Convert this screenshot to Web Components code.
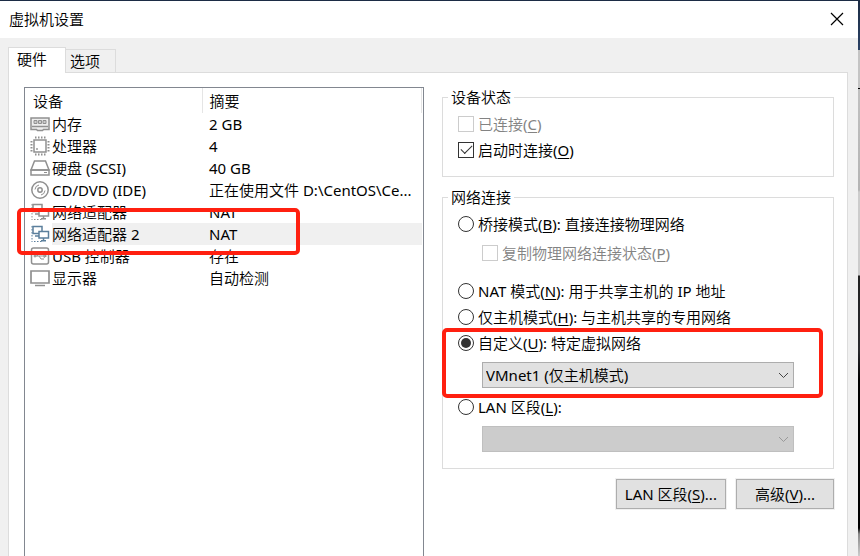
<!DOCTYPE html>
<html lang="zh-CN">
<head>
<meta charset="utf-8">
<title>虚拟机设置</title>
<style>
    html, body { height: 100%; }

    body {
        margin: 0;
        box-sizing: border-box;
        padding: 1px 2px 0 0;
        overflow: hidden;
        font: 15px/20px 'Noto Sans', 'Noto Sans CJK SC DemiLight', 'Noto Sans CJK SC', sans-serif;
        color: #000;
        background: linear-gradient(#1c2c45 1px, #2b4265 50px, #c4c4c4 50px, #c4c4c4 88px, #000 88px, #000 89px, #c0c0c0 89px, #b4b4b4 190px, #ccc 192px, #ccc 275px, #222 276px, #2a2a2e 350px, #000 380px, #000 528px, #8a8a8a 534px, #ccc 556px);
    }
</style>
</head>
<body>
<settings-window heading="虚拟机设置">
    <tab-strip slot="tabs" tabs="硬件,选项"></tab-strip>
    <device-list></device-list>
    <network-settings></network-settings>
</settings-window>

<script>
class SettingsWindow extends HTMLElement {
    constructor() {
        super();
        const heading = this.getAttribute('heading') || '';
        const shadow = this.attachShadow({ mode: 'open' });

        shadow.innerHTML = `
            <style>
            * { box-sizing: border-box; }

            :host {
                display: flex;
                flex-direction: column;
                height: 100%;
                background: #f0f0f0;
            }

            header {
                display: flex;
                align-items: center;
                justify-content: space-between;
                height: 37px;
                padding: 0 8px 2px 9px;
                background: #fff;
            }

            h1 {
                margin: 0;
                font-size: 15px;
                font-weight: 400;
            }

            button {
                display: flex;
                padding: 6px;
                border: 0;
                background: none;
            }

            .body {
                flex: 1;
                display: flex;
                flex-direction: column;
                min-height: 0;
                padding: 9px 10px 0 8px;
            }

            .panel {
                flex: 1;
                display: grid;
                grid-template-columns: 400fr 392fr;
                gap: 18px;
                min-height: 0;
                padding: 14px 13px 0 15px;
                background: #fff;
                border: 1px solid #dcdcdc;
                border-bottom: 0;
            }
            </style>

            <header>
                <h1>${heading}</h1>
                <button type="button" aria-label="关闭">
                    <svg width="14" height="14" viewBox="0 0 14 14" stroke="#000" stroke-width="1.2">
                        <path d="M1 1l12 12M13 1L1 13" />
                    </svg>
                </button>
            </header>
            <div class="body">
                <slot name="tabs"></slot>
                <main class="panel"><slot></slot></main>
            </div>`;
    }
}

class TabStrip extends HTMLElement {
    constructor() {
        super();
        const tabs = (this.getAttribute('tabs') || '').split(',');
        const shadow = this.attachShadow({ mode: 'open' });

        shadow.innerHTML = `
            <style>
            :host {
                display: flex;
                align-items: flex-end;
                position: relative;
                z-index: 1;
                margin-bottom: -1px;
            }

            button {
                box-sizing: border-box;
                height: 24px;
                padding: 0 15px 0 4px;
                border: 1px solid #dcdcdc;
                border-left: 0;
                background: #f0f0f0;
                font: inherit;
                color: inherit;
            }

            button[aria-selected="true"] {
                height: 26px;
                padding: 0 18px 3px 8px;
                border-left: 1px solid #dcdcdc;
                border-bottom: 0;
                background: #fff;
            }
            </style>
            ${tabs.map((t, i) => `<button type="button" role="tab" aria-selected="${i === 0}">${t}</button>`).join('')}`;

        this.setAttribute('role', 'tablist');
        const buttons = shadow.querySelectorAll('button');
        buttons.forEach((b) => {
            b.addEventListener('click', () => {
                buttons.forEach((o) => o.setAttribute('aria-selected', o === b));
            });
        });
    }
}

// Red frame, laid over its positioned parent
class MarkerFrame extends HTMLElement {
    constructor() {
        super();
        const shadow = this.attachShadow({ mode: 'open' });
        shadow.innerHTML = `
            <style>
            :host {
                position: absolute;
                z-index: 2;
                box-sizing: border-box;
                border: 4px solid #ff2010;
                border-radius: 5px;
                pointer-events: none;
            }
            </style>`;
    }
}

const ICONS = {
    memory: `
        <path d="M1 4h18v11.500H13.500l-1 1h-5l-1-1H1z" fill="#eee" stroke-width="1.500"/>
        <path d="M4 6.500h3v3H4zM8.500 6.500h3v3h-3zM13 6.500h3v3h-3z" fill="#ccc"/>
        <path d="M2 12.500h16" stroke-width="1.500"/>`,
    cpu: `
        <path d="M4 4h12v12H4z" stroke-width="1.500"/>
        <path d="M5 1.500h11M5 18.500h11M1.500 5v11M18.500 5v11" stroke-width="2" stroke-dasharray="1.500 1.500"/>
        <circle cx="7" cy="13" r=".6"/>`,
    disk: `
        <path d="M4.500 3h11l3.500 9H1z" stroke-width="1.500"/>
        <path d="M1 12h18v5H1z" stroke-width="1.500"/>
        <path d="M14 14.500h3"/>`,
    cd: `
        <circle cx="10" cy="10" r="8.200" stroke-width="1.500"/>
        <circle cx="10" cy="10" r="2.200" stroke-width="1.500"/>
        <path d="M5 9.500A5 5 0 0 1 9 5M15 10.500A5 5 0 0 1 11 15"/>`,
    network: `
        <path d="M2 2v16M4 17.500h8" stroke-dasharray="1.500 1.500"/>
        <path d="M3 2.500h9v7H3z" fill="#fff" stroke-width="1.500"/>
        <path d="M5 12h4" stroke-width="1.500"/>
        <path d="M9 7.500h9.500v6.500H9z" fill="#fff" stroke-width="1.500"/>
        <path d="M13.500 14v2.500M11 16.700h5" stroke-width="1.500"/>`,
    usb: `
        <rect x="1.500" y="2" width="17" height="16" rx="2" stroke-width="1.500"/>
        <path d="M4 10h12M7 10l2-3h3M9 10l2 3h3"/>
        <path d="M14 8.500l2.500 1.500-2.500 1.500z"/>
        <circle cx="5" cy="10" r="1"/>`,
    display: `
        <path d="M1 3h18v12H1z" stroke-width="1.700"/>
        <path d="M5 17.500h10" stroke-width="1.500"/>`
};

const DEVICES = [
    { icon: 'memory', name: '内存', summary: '2 GB' },
    { icon: 'cpu', name: '处理器', summary: '4' },
    { icon: 'disk', name: '硬盘 (SCSI)', summary: '40 GB' },
    { icon: 'cd', name: 'CD/DVD (IDE)', summary: '正在使用文件 D:\\CentOS\\Ce...' },
    { icon: 'network', name: '网络适配器', summary: 'NAT' },
    { icon: 'network', name: '网络适配器 2', summary: 'NAT', selected: true },
    { icon: 'usb', name: 'USB 控制器', summary: '存在' },
    { icon: 'display', name: '显示器', summary: '自动检测' }
];

class DeviceList extends HTMLElement {
    constructor() {
        super();
        const shadow = this.attachShadow({ mode: 'open' });

        const rowsHTML = DEVICES.map((d) => `
            <tr class="${d.selected ? 'selected' : ''}">
                <td class="icon">
                    <svg width="20" height="20" viewBox="0 0 20 20" fill="none">${ICONS[d.icon]}</svg>
                    ${d.selected ? '<marker-frame></marker-frame>' : ''}
                </td>
                <td>${d.name}</td>
                <td class="summary">${d.summary}</td>
            </tr>`).join('');

        shadow.innerHTML = `
            <style>
            :host {
                display: block;
                box-sizing: border-box;
                min-width: 0;
                padding: 0 1px;
                border: 1px solid #828790;
                border-bottom: 0;
            }

            table {
                width: 100%;
                table-layout: fixed;
                border-collapse: collapse;
            }

            .col-icon { width: 26px; }
            .col-name { width: 150px; }

            th, td {
                padding: 0;
                height: 22px;
                line-height: 20px;
                font-weight: 400;
                text-align: left;
                white-space: nowrap;
            }

            th {
                height: 25px;
                border-right: 1px solid #e5e5e5;
            }

            th:first-child { padding-left: 7px; }
            th:last-child, .summary { padding-left: 7px; }

            tr { position: relative; }
            .icon { padding-left: 4px; }
            .selected td:not(.icon) { background: #f0f0f0; }

            svg {
                display: block;
                stroke: #909090;
            }

            .selected svg { stroke: #5b7f9c; }

            marker-frame {
                top: -15px;
                left: -9px;
                right: 122px;
                height: 47px;
            }
            </style>

            <table>
                <colgroup><col class="col-icon"><col class="col-name"><col></colgroup>
                <thead><tr><th colspan="2">设备</th><th>摘要</th></tr></thead>
                <tbody>${rowsHTML}</tbody>
            </table>`;
    }
}

class GroupBox extends HTMLElement {
    constructor() {
        super();
        const legend = this.getAttribute('legend') || '';
        const shadow = this.attachShadow({ mode: 'open' });

        shadow.innerHTML = `
            <style>
            :host { display: block; }

            fieldset {
                min-width: 0;
                margin: 0;
                padding: 4px 15px 10px;
                border: 1px solid #dcdcdc;
            }

            legend {
                margin-left: -10px;
                padding: 0 3px;
                line-height: 20px;
            }
            </style>
            <fieldset>
                <legend>${legend}</legend>
                <slot></slot>
            </fieldset>`;
    }
}

// Frame and arrow for a slotted <select>
class DropDown extends HTMLElement {
    constructor() {
        super();
        const shadow = this.attachShadow({ mode: 'open' });

        shadow.innerHTML = `
            <style>
            :host {
                display: grid;
                align-items: center;
                padding: 6px 24px;
            }

            ::slotted(select) {
                grid-area: 1 / 1;
                appearance: none;
                box-sizing: border-box;
                width: 100%;
                height: 26px;
                padding: 0 24px 0 3px;
                border: 1px solid #adadad;
                border-radius: 0;
                background: #e1e1e1;
                font: inherit;
                color: #000;
            }

            ::slotted(select:disabled) {
                border-color: #bfbfbf;
                background: #ccc;
                opacity: 1;
            }

            svg {
                grid-area: 1 / 1;
                justify-self: end;
                margin-right: 5px;
                fill: none;
                stroke: #444;
                pointer-events: none;
                z-index: 1;
            }

            :host([disabled]) svg { stroke: #999; }
            </style>
            <slot></slot>
            <svg width="11" height="7" viewBox="0 0 11 7"><path d="M1 1l4.500 4.500L10 1" /></svg>`;
    }
}

class NetworkSettings extends HTMLElement {
    constructor() {
        super();
        const shadow = this.attachShadow({ mode: 'open' });

        shadow.innerHTML = `
            <style>
            :host {
                display: flex;
                flex-direction: column;
                gap: 10px;
                min-width: 0;
            }

            .option {
                display: flex;
                align-items: center;
                gap: 4px;
                height: 26px;
                white-space: nowrap;
            }

            .option.sub {
                height: 32px;
                margin: 0 0 9px 24px;
            }

            .option.disabled { color: #838383; }
            u { text-underline-offset: 2px; }

            input {
                appearance: none;
                display: grid;
                place-items: center;
                box-sizing: border-box;
                flex: none;
                width: 16px;
                height: 16px;
                margin: 0;
                border: 1px solid #333;
                background: #fff;
            }

            input:disabled { border-color: #ccc; }
            input[type="radio"] { border-radius: 50%; }

            input[type="radio"]:checked::before {
                content: '';
                width: 10px;
                height: 10px;
                border-radius: 50%;
                background: #333;
            }

            input[type="checkbox"]:checked::before {
                content: '';
                width: 11px;
                height: 6px;
                box-sizing: border-box;
                border: solid #333;
                border-width: 0 0 1px 1px;
                transform: translateY(-2px) rotate(-45deg);
            }

            .custom { position: relative; }

            .custom marker-frame {
                top: -2px;
                bottom: -4px;
                left: -16px;
                right: -5px;
            }

            .status { padding-bottom: 3px; }

            .actions {
                display: flex;
                justify-content: flex-end;
                gap: 10px;
            }

            .actions button {
                height: 30px;
                padding: 0 8px;
                border: 1px solid #adadad;
                outline: 1px solid #f0f0f0;
                background: #e1e1e1;
                font: inherit;
                color: inherit;
            }

            .actions button + button { padding: 0 18px; }
            </style>

            <group-box legend="设备状态">
                <div class="status">
                    <label class="option disabled"><input type="checkbox" disabled><span>已连接(<u>C</u>)</span></label>
                    <label class="option"><input type="checkbox" checked><span>启动时连接(<u>O</u>)</span></label>
                </div>
            </group-box>

            <group-box legend="网络连接">
                <label class="option"><input type="radio" name="mode"><span>桥接模式(<u>B</u>): 直接连接物理网络</span></label>
                <label class="option sub disabled"><input type="checkbox" disabled><span>复制物理网络连接状态(<u>P</u>)</span></label>
                <label class="option"><input type="radio" name="mode"><span>NAT 模式(<u>N</u>): 用于共享主机的 IP 地址</span></label>
                <label class="option"><input type="radio" name="mode"><span>仅主机模式(<u>H</u>): 与主机共享的专用网络</span></label>
                <div class="custom">
                    <label class="option"><input type="radio" name="mode" checked><span>自定义(<u>U</u>): 特定虚拟网络</span></label>
                    <drop-down><select aria-label="特定虚拟网络"><option>VMnet1 (仅主机模式)</option></select></drop-down>
                    <marker-frame></marker-frame>
                </div>
                <label class="option"><input type="radio" name="mode"><span>LAN 区段(<u>L</u>):</span></label>
                <drop-down disabled><select aria-label="LAN 区段" disabled><option></option></select></drop-down>
            </group-box>

            <div class="actions">
                <button type="button">LAN 区段(<u>S</u>)...</button>
                <button type="button">高级(<u>V</u>)...</button>
            </div>`;
    }
}

customElements.define('marker-frame', MarkerFrame);
customElements.define('group-box', GroupBox);
customElements.define('drop-down', DropDown);
customElements.define('tab-strip', TabStrip);
customElements.define('device-list', DeviceList);
customElements.define('network-settings', NetworkSettings);
customElements.define('settings-window', SettingsWindow);
</script>
</body>
</html>
